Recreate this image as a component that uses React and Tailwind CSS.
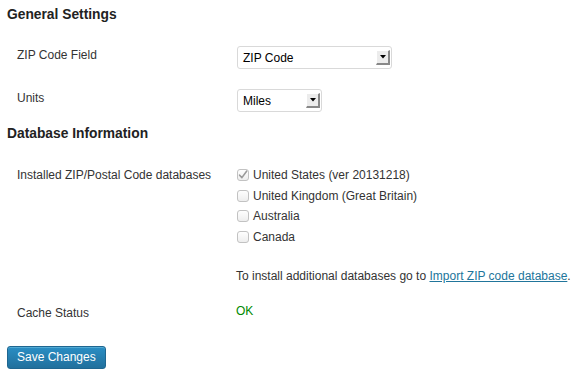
import React from "react";

const SelectBox = ({ value, width }) => (
  <div
    className="flex items-center justify-between h-[23px] rounded-[3px] border border-[#d9d9d9] bg-white pl-[5px] pr-[1px]"
    style={{ width }}
  >
    <span className="text-black">{value}</span>
    <span className="flex items-center justify-center w-[14px] h-[15px] bg-[#ececec] border-t border-l border-t-white border-l-white border-r-2 border-b-2 border-r-[#888] border-b-[#888]">
      <svg width="6" height="4" viewBox="0 0 6 4">
        <path d="M0 0 L6 0 L3 3.5 Z" fill="#000" />
      </svg>
    </span>
  </div>
);

const Checkbox = ({ checked }) => (
  <svg width="12" height="12" viewBox="0 0 12 12" className="mr-[4px] shrink-0">
    <defs>
      <linearGradient id="cb" x1="0" y1="0" x2="0" y2="1">
        <stop offset="0" stopColor="#ffffff" />
        <stop offset="1" stopColor="#ededed" />
      </linearGradient>
    </defs>
    <rect x="0.5" y="0.5" width="11" height="11" rx="2.5" fill="url(#cb)" stroke="#c2c2c2" />
    {checked && (
      <path d="M2.6 6.2 L4.9 8.6 L9.6 2.2" fill="none" stroke="#9a9a9a" strokeWidth="1.6" strokeLinecap="round" strokeLinejoin="round" />
    )}
  </svg>
);

const databases = [
  { label: "United States (ver 20131218)", checked: true },
  { label: "United Kingdom (Great Britain)", checked: false },
  { label: "Australia", checked: false },
  { label: "Canada", checked: false },
];

export default function App() {
  return (
    <div
      className="w-[586px] h-[387px] bg-white text-[#333] text-[12px] pl-[7px] overflow-hidden"
      style={{ fontFamily: '"Liberation Sans", Arial, Helvetica, sans-serif' }}
    >
      <h3 className="text-[13.8px] font-bold text-[#222] leading-[18px] pt-[6px]">General Settings</h3>

      <div className="flex items-start mt-[22px] leading-[18px]">
        <div className="w-[230px] pl-[10px]">ZIP Code Field</div>
        <SelectBox value="ZIP Code" width={155} />
      </div>

      <div className="flex items-start mt-[20px] leading-[18px]">
        <div className="w-[230px] pl-[10px]">Units</div>
        <SelectBox value="Miles" width={85} />
      </div>

      <h3 className="text-[13.8px] font-bold text-[#222] leading-[18px] mt-[13px]">Database Information</h3>

      <div className="flex items-start mt-[22px]">
        <div className="w-[230px] pl-[10px] leading-[20.5px]">Installed ZIP/Postal Code databases</div>
        <div className="flex flex-col">
          {databases.map((db) => (
            <label key={db.label} className="flex items-center h-[20.5px]">
              <Checkbox checked={db.checked} />
              <span>{db.label}</span>
            </label>
          ))}
          <p className="leading-[18px] mt-[20px] -ml-[1px]">
            To install additional databases go to{" "}
            <a href="#" className="text-[#21759b] underline">Import ZIP code database</a>.
          </p>
        </div>
      </div>

      <div className="flex items-start mt-[19px] leading-[18px]">
        <div className="w-[230px] pl-[10px]">Cache Status</div>
        <div className="text-[#008a00] -ml-[1px] -mt-[2px]">OK</div>
      </div>

      <button className="mt-[24px] h-[23px] px-[9px] rounded-[3px] border border-[#1f6690] bg-gradient-to-b from-[#2a8ec4] to-[#21709d] text-white text-[12px] leading-[21px] shadow-[inset_0_1px_0_rgba(120,200,230,0.5)]">
        Save Changes
      </button>
    </div>
  );
}
